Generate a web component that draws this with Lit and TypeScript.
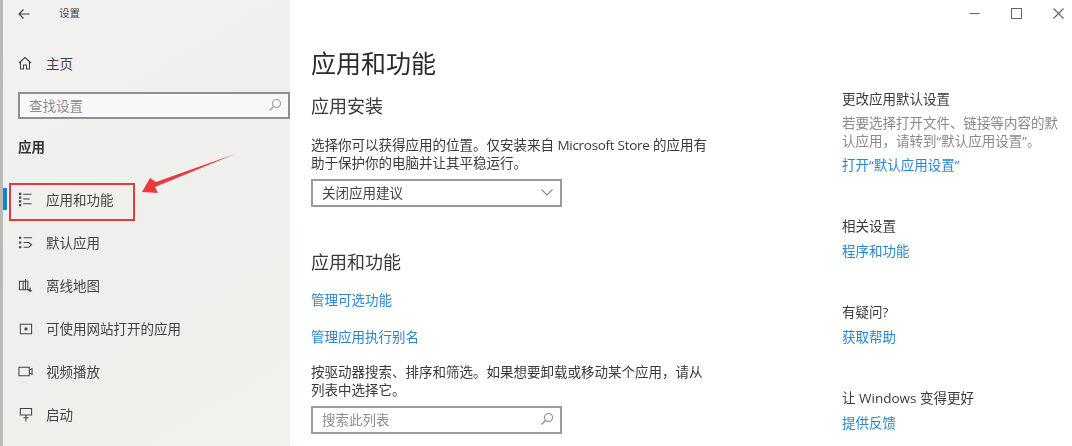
import { LitElement, html, css, svg } from "lit";
import { customElement } from "lit/decorators.js";

const icons: Record<string, unknown> = {
  list: svg`<path d="M1 2h2.500M1 6h2.500M1 10h2.500M1 14h2.500" stroke-width="2.200"/><path d="M5.500 2.500h9M5.500 7.500h7M5.500 12.500h9"/>`,
  defaults: svg`<path d="M1 3h2.500M1 8h2.500M1 13h2.500" stroke-width="2.200"/><path d="M6 3h9M6 8h5.500l3 2.500-3 2.500H6"/>`,
  map: svg`<path d="M1.500 3.500h4v9h-4zM5.500 3.500h5v9h-5zM8 1v12M10.500 12.500h2M13 10v5M11 13.500h4"/>`,
  web: svg`<path d="M2.500 3.500h12v10h-12z"/><path d="M7 8.500h3" stroke-width="3"/>`,
  video: svg`<path d="M1 3.500h11v9H1zM12 6.500l3-1.500v6l-3-1.500"/>`,
  startup: svg`<path d="M2.500 1.500h12v7h-12zM8.500 8.500v7M6 11.500h5"/>`,
};

@customElement("app-root")
export class AppRoot extends LitElement {
  static styles = css`
    :host {
      display: block;
      width: 1072px;
      height: 446px;
      overflow: hidden;
      background: #fff;
      font-family: "Open Sans", "Noto Sans CJK SC", sans-serif;
      font-size: 13.500px;
      color: #333;
    }
    .page {
      display: flex;
      width: 1072px;
      height: 446px;
      position: relative;
      filter: blur(0.55px);
    }
    svg { display: block; fill: none; stroke: currentColor; stroke-width: 1.100; flex: none; }

    /* Sidebar */
    .side {
      width: 287px;
      flex: none;
      border-left: 3px solid #b9b9b9;
      background: linear-gradient(150deg, #f1f1f1 0%, #efefed 55%, #eff1eb 85%, #f1f2ee 100%);
      display: flex;
      flex-direction: column;
      color: #444;
    }
    .side-head { height: 27px; display: flex; align-items: center; gap: 29px; padding-left: 15px; font-size: 10.500px; }
    .side-head span { padding-bottom: 2px; }
    .home { margin-top: 15px; height: 42px; display: flex; align-items: center; gap: 14px; padding-left: 15px; }
    .search-side {
      margin: 8px 0 0 15px;
      width: 253px;
      height: 21px;
      border: 2px solid #8f8f8f;
      background: #f8f8f8;
      display: flex;
      align-items: center;
      justify-content: space-between;
      padding: 0 6px 2px 9px;
      color: #8d8d8d;
    }
    .side-title { margin: 14px 0 0 15px; height: 27px; display: flex; align-items: center; font-weight: 700; color: #333; padding-bottom: 2px; box-sizing: border-box; }
    .nav { margin-top: 18px; display: flex; flex-direction: column; }
    .nav-item { height: 43px; display: flex; align-items: center; gap: 13px; padding-left: 15px; position: relative; }
    .nav-item span { padding-bottom: 2px; }
    .nav-item svg { width: 15px; height: 15px; }
    .indicator { position: absolute; left: 0; top: 10px; width: 4px; height: 22px; background: #1a7fd0; }

    /* Main */
    .main { width: 552px; flex: none; padding-left: 21px; box-sizing: border-box; display: flex; flex-direction: column; color: #3a3a3a; }
    h1 { margin: 43px 0 0; font-size: 25px; font-weight: 400; line-height: 40px; height: 40px; color: #2b2b2b; }
    h2 { margin: 0; font-size: 18px; font-weight: 400; line-height: 26px; color: #3a3a3a; }
    .s1 { margin-top: 10px; }
    .para { margin: 0; width: 402px; line-height: 18px; }
    .line { display: flex; }
    .latin { letter-spacing: -0.3px; margin: 0 3.500px; }
    .p1 { margin-top: 17px; }
    .box {
      width: 251px;
      height: 28px;
      box-sizing: border-box;
      border: 2px solid #9a9a9a;
      background: #fff;
      display: flex;
      align-items: center;
      justify-content: space-between;
      padding: 0 6px 3px 9px;
      margin-top: 7px;
      color: #444;
    }
    .box svg { color: #8a8a8a; }
    .search-side svg { color: #999; }
    .s2 { margin-top: 42px; }
    .link { color: #2a86d2; }
    .main .link { height: 37px; display: flex; align-items: center; padding-bottom: 2px; box-sizing: border-box; }
    .l1 { margin-top: 6px; }
    .p2 { margin-top: 8px; }
    .ph { color: #8d8d8d; }

    /* Aside */
    .aside { flex: 1; display: flex; flex-direction: column; position: relative; }
    .controls { height: 27px; display: flex; justify-content: flex-end; align-items: center; gap: 31px; padding-right: 8px; color: #666; }
    .a-block { display: flex; flex-direction: column; line-height: 22px; color: #3a3a3a; }
    .a1 { margin-top: 61px; }
    .muted { color: #8a8a8a; line-height: 18px; margin: 4px 0; width: 222px; }
    .a2, .a3, .a4 { margin-top: 39px; gap: 3px; }

    /* Annotation */
    .mark { position: absolute; left: 9px; top: 183px; width: 126px; height: 38px; box-sizing: border-box; border: 2px solid #e8393f; }
    .arrow { position: absolute; left: 0; top: 0; stroke: none; fill: #ec3a3c; }
  `;

  private icon(name: string) {
    return html`<svg width="16" height="16" viewBox="0 0 16 16">${icons[name]}</svg>`;
  }

  private glass() {
    return html`<svg width="14" height="14" viewBox="0 0 14 14"><circle cx="8.500" cy="5.500" r="4"/><path d="M5.500 8.500L1.500 12.500"/></svg>`;
  }

  render() {
    const nav: [string, string][] = [
      ["list", "应用和功能"],
      ["defaults", "默认应用"],
      ["map", "离线地图"],
      ["web", "可使用网站打开的应用"],
      ["video", "视频播放"],
      ["startup", "启动"],
    ];
    return html`<div class="page">
      <div class="side">
        <div class="side-head">
          <svg width="12" height="12" viewBox="0 0 12 12"><path d="M11.500 6H1M5.500 1.500L1 6l4.500 4.500"/></svg>
          <span>设置</span>
        </div>
        <div class="home">
          <svg width="14" height="14" viewBox="0 0 14 14"><path d="M1 7l6-5.500L13 7M2.500 6v7h3V9h3v4h3V6"/></svg>
          <span>主页</span>
        </div>
        <div class="search-side"><span>查找设置</span>${this.glass()}</div>
        <div class="side-title">应用</div>
        <div class="nav">
          ${nav.map(
            ([ic, label], i) => html`<div class="nav-item">
              ${i === 0 ? html`<div class="indicator"></div>` : ""}
              ${this.icon(ic)}<span>${label}</span>
            </div>`
          )}
        </div>
      </div>
      <div class="main">
        <h1>应用和功能</h1>
        <h2 class="s1">应用安装</h2>
        <div class="para p1">
          <div class="line"><span>选择你可以获得应用的位置。仅安装来自</span><span class="latin">Microsoft Store</span><span>的应用有</span></div>
          <div class="line"><span>助于保护你的电脑并让其平稳运行。</span></div>
        </div>
        <div class="box"><span>关闭应用建议</span>
          <svg width="14" height="14" viewBox="0 0 14 14"><path d="M1.500 4.500L7 10l5.500-5.500"/></svg>
        </div>
        <h2 class="s2">应用和功能</h2>
        <div class="link l1">管理可选功能</div>
        <div class="link">管理应用执行别名</div>
        <p class="para p2">按驱动器搜索、排序和筛选。如果想要卸载或移动某个应用，请从列表中选择它。</p>
        <div class="box"><span class="ph">搜索此列表</span>${this.glass()}</div>
      </div>
      <div class="aside">
        <div class="controls">
          <svg width="11" height="11" viewBox="0 0 11 11"><path d="M0.500 5.500h10"/></svg>
          <svg width="11" height="11" viewBox="0 0 11 11"><path d="M0.500 0.500h10v10h-10z"/></svg>
          <svg width="11" height="11" viewBox="0 0 11 11"><path d="M0.500 0.500l10 10M10.500 0.500l-10 10"/></svg>
        </div>
        <div class="a-block a1">
          <span>更改应用默认设置</span>
          <span class="muted">若要选择打开文件、链接等内容的默认应用，请转到“默认应用设置”。</span>
          <span class="link">打开“默认应用设置”</span>
        </div>
        <div class="a-block a2"><span>相关设置</span><span class="link">程序和功能</span></div>
        <div class="a-block a3"><span>有疑问?</span><span class="link">获取帮助</span></div>
        <div class="a-block a4"><span>让 Windows 变得更好</span><span class="link">提供反馈</span></div>
      </div>
      <div class="mark"></div>
      <svg class="arrow" width="290" height="230" viewBox="0 0 290 230">
        <path d="M235 154L156 182L150 178L142 192L158 193L155 187Z"/>
      </svg>
    </div>`;
  }
}
